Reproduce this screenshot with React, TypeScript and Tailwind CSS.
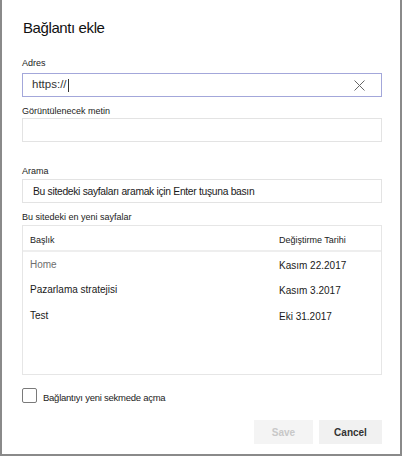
const pages = [
  { title: "Home", date: "Kasım 22.2017", muted: true },
  { title: "Pazarlama stratejisi", date: "Kasım 3.2017", muted: false },
  { title: "Test", date: "Eki 31.2017", muted: false },
];

export default function App() {
  return (
    <div className="w-[402px] h-[456px] bg-white border-x-2 border-b-2 border-[#8a8a8a] font-['Liberation_Sans',Arial,sans-serif] text-[#222]">
      <div className="flex flex-col pl-[20px] pr-[18px]">
        {/* Title */}
        <h1 className="mt-[18px] h-[20px] leading-[20px] text-[15px] tracking-[-0.4px] text-[#111] pl-[1px]">
          Bağlantı ekle
        </h1>

        {/* Adres */}
        <label className="mt-[19px] h-[12px] leading-[12px] text-[9px]">Adres</label>
        <div className="mt-[4px] h-[24px] flex items-center border border-[#a3a7da] pl-[9px] pr-[16px]">
          <span className="text-[11.5px] text-[#333]">https://</span>
          <span className="ml-[1px] w-px h-[13px] bg-[#333]" />
          <span className="flex-1" />
          <svg width="11" height="11" viewBox="0 0 11 11" fill="none" stroke="#666" strokeWidth="1">
            <path d="M0.5 0.5 L10.5 10.5 M10.5 0.5 L0.5 10.5" />
          </svg>
        </div>

        {/* Görüntülenecek metin */}
        <label className="mt-[8px] h-[12px] leading-[12px] text-[9px]">Görüntülenecek metin</label>
        <div className="mt-[1px] h-[24px] border border-[#e3e3e3]" />

        {/* Arama */}
        <label className="mt-[23px] h-[12px] leading-[12px] text-[9px]">Arama</label>
        <div className="mt-[2px] h-[24px] flex items-center border border-[#e3e3e3] pl-[10px] pt-[2px]">
          <span className="text-[10.3px] text-[#1a1a1a] tracking-[-0.3px]">
            Bu sitedeki sayfaları aramak için Enter tuşuna basın
          </span>
        </div>

        {/* Recent pages */}
        <label className="mt-[8px] h-[12px] leading-[12px] text-[9px]">Bu sitedeki en yeni sayfalar</label>
        <div className="mt-[2px] h-[150px] border border-[#e6e6e6] flex flex-col">
          <div className="h-[24px] grid grid-cols-[249px_1fr] items-center pl-[7px] pt-[6px] text-[9px] text-[#222]">
            <span>Başlık</span>
            <span>Değiştirme Tarihi</span>
          </div>
          <div className="h-[2px] bg-[#eeeeee]" />
          {pages.map((p, i) => (
            <div
              key={p.title}
              className={`grid grid-cols-[249px_1fr] items-center pl-[7px] text-[10px] ${
                i === 0 ? "h-[24px]" : "h-[26px]"
              }`}
            >
              <span className={p.muted ? "text-[#6e6e6e]" : "text-[#1a1a1a]"}>{p.title}</span>
              <span className="text-[#1a1a1a] pt-[2px]">{p.date}</span>
            </div>
          ))}
        </div>

        {/* Checkbox */}
        <div className="mt-[11px] flex items-center gap-[6px]">
          <span className="w-[15px] h-[15px] border border-[#7a7a7a] rounded-[2px]" />
          <span className="text-[9.5px] pt-[5px] tracking-[-0.25px]">Bağlantıyı yeni sekmede açma</span>
        </div>

        {/* Buttons */}
        <div className="mt-[15px] flex justify-end gap-[6px]">
          <button className="w-[59px] h-[24px] bg-[#f4f4f4] text-[10px] font-semibold text-[#c8c8c8]">
            Save
          </button>
          <button className="w-[63px] h-[24px] bg-[#f1f1f1] text-[10px] font-semibold text-[#333]">
            Cancel
          </button>
        </div>
      </div>
    </div>
  );
}
